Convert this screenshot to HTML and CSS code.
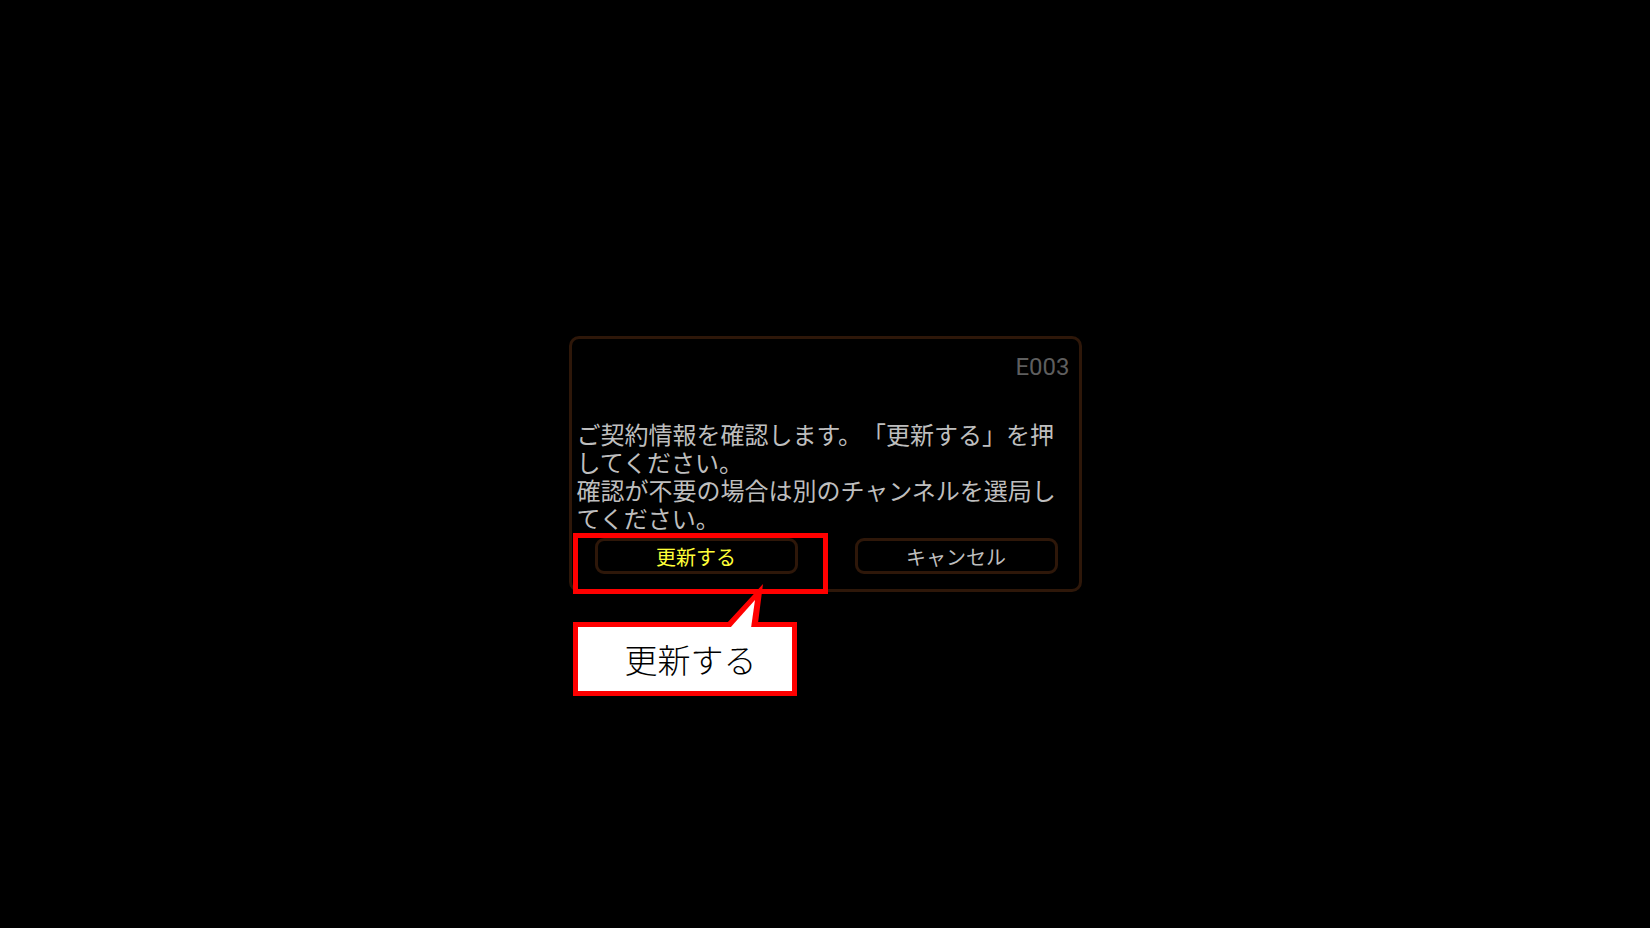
FILE: index.html
```html
<!DOCTYPE html>
<html lang="ja">
  <head>
    <meta charset="UTF-8" />
    <meta name="viewport" content="width=device-width, initial-scale=1.0" />
    <title>ご契約情報の確認</title>
    <link rel="stylesheet" href="styles.css">
  </head>
  <body>
    <main class="screen">
      <section class="dialog" role="dialog" aria-labelledby="message">
        <p class="code">E003</p>
        <p class="message" id="message">
          ご契約情報を確認します。「更新する」を押してください。<br />確認が不要の場合は別のチャンネルを選局してください。
        </p>
        <div class="actions">
          <button type="button" class="button selected">更新する</button>
          <button type="button" class="button">キャンセル</button>
        </div>
        <div class="highlight"></div>
        <div class="callout">
          <svg class="callout-tail" viewBox="0 0 40 44" aria-hidden="true">
            <path fill="#ff0000" d="M2 39 L38 0 L33 39 L33 43 L2 43 Z" />
            <path fill="#ffffff" d="M5 44 L30 16 L26 44 Z" />
          </svg>
          更新する
        </div>
      </section>
    </main>
  </body>
</html>
```

FILE: styles.css
```css
body {
  margin: 0;
  background-color: #000;
  font-family: Roboto, 'Noto Sans CJK JP', sans-serif;
}
.screen {
  min-height: 100vh;
  display: flex;
  align-items: center;
  justify-content: center;
}
.dialog {
  position: relative;
  box-sizing: border-box;
  width: 513px;
  max-width: 100%;
  padding: 12px 9px 15px 5px;
  border: 3px solid #2e1709;
  border-radius: 10px;
}
.code {
  margin: 0 0 37px;
  color: #5e5e5e;
  font-size: 24px;
  line-height: 32px;
  text-align: right;
}
.message {
  margin: 0;
  color: #bebebe;
  font-family: 'Noto Sans CJK JP', sans-serif;
  font-size: 24px;
  line-height: 28px;
  text-spacing-trim: space-all;
}
.actions {
  display: flex;
  justify-content: space-between;
  gap: 16px;
  margin: 6px 12px 0 18px;
}
.button {
  width: 203px;
  height: 36px;
  padding: 2px 0 0;
  border: 3px solid #2e1709;
  border-radius: 9px;
  background-color: transparent;
  color: #bebebe;
  font-family: 'Noto Sans CJK JP', sans-serif;
  font-size: 20px;
  line-height: 28px;
  cursor: pointer;
}
.selected {
  color: #ffff38;
}

/* annotations over the dialog */
.highlight {
  position: absolute;
  left: 1px;
  bottom: -5px;
  box-sizing: border-box;
  width: 255px;
  height: 61px;
  border: 5px solid #f00;
  pointer-events: none;
}
.callout {
  position: absolute;
  top: 283px;
  left: 1px;
  box-sizing: border-box;
  width: 224px;
  padding: 8px 0 8px 12px;
  border: 5px solid #f00;
  background-color: #fff;
  color: #000;
  font-family: 'Noto Sans CJK JP', sans-serif;
  font-size: 33px;
  font-weight: 200;
  line-height: 48px;
  text-align: center;
}
.callout-tail {
  position: absolute;
  top: -43px;
  left: 147px;
  width: 40px;
  height: 44px;
}
```
